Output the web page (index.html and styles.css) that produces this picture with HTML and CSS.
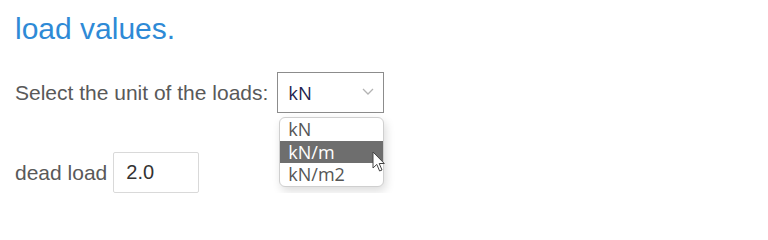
FILE: index.html
```html
<!DOCTYPE html>
<html lang="en">
<head>
<meta charset="utf-8">
<title>Load values</title>
<link rel="stylesheet" href="styles.css">
</head>
<body>
<main class="page">
  <h1 class="title">load values.</h1>
  <div class="row row-unit">
    <label class="label">Select the unit of the loads:</label>
    <div class="select-wrap">
      <div class="select">
        <span class="select-value">kN</span>
        <svg class="chevron" width="12" height="7" viewBox="0 0 12 7"><path d="M1 1 L6 6 L11 1" fill="none" stroke="#b3b3b3" stroke-width="1.3"/></svg>
      </div>
      <ul class="dropdown">
        <li class="option">kN</li>
        <li class="option option-active">kN/m</li>
        <li class="option">kN/m2</li>
      </ul>
      <svg class="cursor" width="14" height="22" viewBox="0 0 14 22"><path d="M1 1 L1 17 L4.8 13.4 L7.6 20 L10 19 L7.2 12.5 L12.3 12.5 Z" fill="#fff" stroke="#444" stroke-width="1" stroke-linejoin="round"/></svg>
    </div>
  </div>
  <div class="row row-dead">
    <label class="label">dead load</label>
    <div class="input">2.0</div>
  </div>
</main>
</body>
</html>
```

FILE: styles.css
```css
html, body {
  margin: 0;
  padding: 0;
  background: #ffffff;
}

.page {
  padding: 12px 0 0 15px;
  font-family: "Liberation Sans", Arial, sans-serif;
}

.title {
  margin: 0;
  font-size: 30px;
  line-height: 34px;
  font-weight: normal;
  color: #2e8ad6;
}

.row {
  display: flex;
  align-items: center;
}

.row-unit {
  margin-top: 26px;
}

.row-dead {
  margin-top: 39px;
}

.label {
  font-size: 21px;
  color: #595959;
  margin-right: 9px;
}

.row-dead .label {
  margin-right: 6px;
}

.select-wrap {
  position: relative;
}

.select {
  box-sizing: border-box;
  width: 107px;
  height: 41px;
  border: 1px solid #8c8c8c;
  display: flex;
  align-items: center;
  justify-content: space-between;
  padding: 0 9px 0 10px;
  background: #fff;
}

.select-value {
  font-family: "Open Sans", sans-serif;
  font-size: 18.5px;
  color: #1f1f4f;
}

.chevron {
  display: block;
  margin-top: -3px;
}

.dropdown {
  position: absolute;
  top: 45px;
  left: 2px;
  box-sizing: border-box;
  width: 105px;
  margin: 0;
  padding: 0;
  list-style: none;
  border: 1px solid #cfcfcf;
  border-radius: 6px;
  overflow: hidden;
  background: #fff;
  box-shadow: 2px 4px 10px rgba(0, 0, 0, 0.14);
}

.option {
  font-family: "Open Sans", sans-serif;
  font-size: 18px;
  line-height: 22.5px;
  height: 22.5px;
  padding-left: 8px;
  color: #555;
}

.option-active {
  background: #6e6e6e;
  color: #fff;
}

.cursor {
  position: absolute;
  left: 95px;
  top: 79px;
}

.input {
  box-sizing: border-box;
  width: 86px;
  height: 41px;
  border: 1px solid #d9d9d9;
  border-radius: 2px;
  display: flex;
  align-items: center;
  padding-left: 12px;
  font-size: 20px;
  color: #333;
}
```
